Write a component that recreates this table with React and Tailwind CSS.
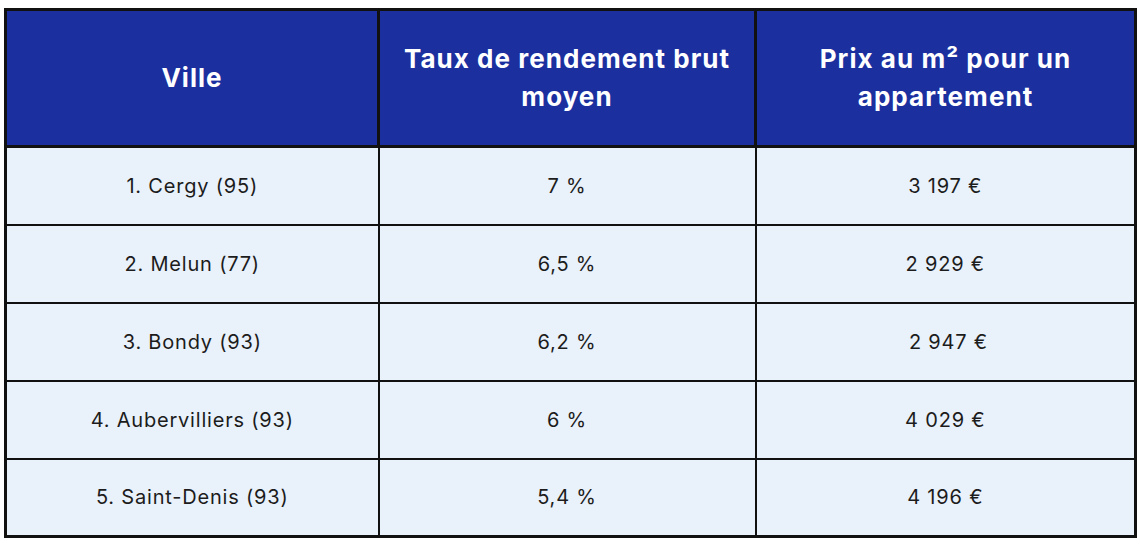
import React from "react";

const rows = [
  ["1. Cergy (95)", "7 %", "3 197 €"],
  ["2. Melun (77)", "6,5 %", "2 929 €"],
  ["3. Bondy (93)", "6,2 %", "\u00a02 947 €"],
  ["4. Aubervilliers (93)", "6 %", "4 029 €"],
  ["5. Saint-Denis (93)", "5,4 %", "4 196 €"],
];

export default function App() {
  return (
    <div className="w-[1140px] h-[546px] bg-white pl-[4px] pt-[8px] font-['Inter','Liberation_Sans',sans-serif]">
      <table className="w-[1130px] border-collapse border-[3px] border-[#111] table-fixed">
        <colgroup>
          <col className="w-[373px]" />
          <col className="w-[377px]" />
          <col className="w-[380px]" />
        </colgroup>
        <thead>
          <tr className="h-[137px] bg-[#1b2f9f] text-white">
            <th className="border-[3px] border-[#111] text-[26px] font-bold tracking-[0.04em] leading-[38px] px-4">
              Ville
            </th>
            <th className="border-[3px] border-[#111] text-[26px] font-bold tracking-[0.04em] leading-[38px] px-4">
              Taux de rendement brut moyen
            </th>
            <th className="border-[3px] border-[#111] text-[26px] font-bold tracking-[0.04em] leading-[38px] px-12">
              Prix au m² pour un appartement
            </th>
          </tr>
        </thead>
        <tbody>
          {rows.map((r) => (
            <tr key={r[0]} className="h-[78px] bg-[#e9f1fa] text-[#1c1c1c] text-[20px] tracking-[0.04em]">
              {r.map((c, i) => (
                <td key={i} className="border-2 border-[#111] text-center">
                  {c}
                </td>
              ))}
            </tr>
          ))}
        </tbody>
      </table>
    </div>
  );
}
